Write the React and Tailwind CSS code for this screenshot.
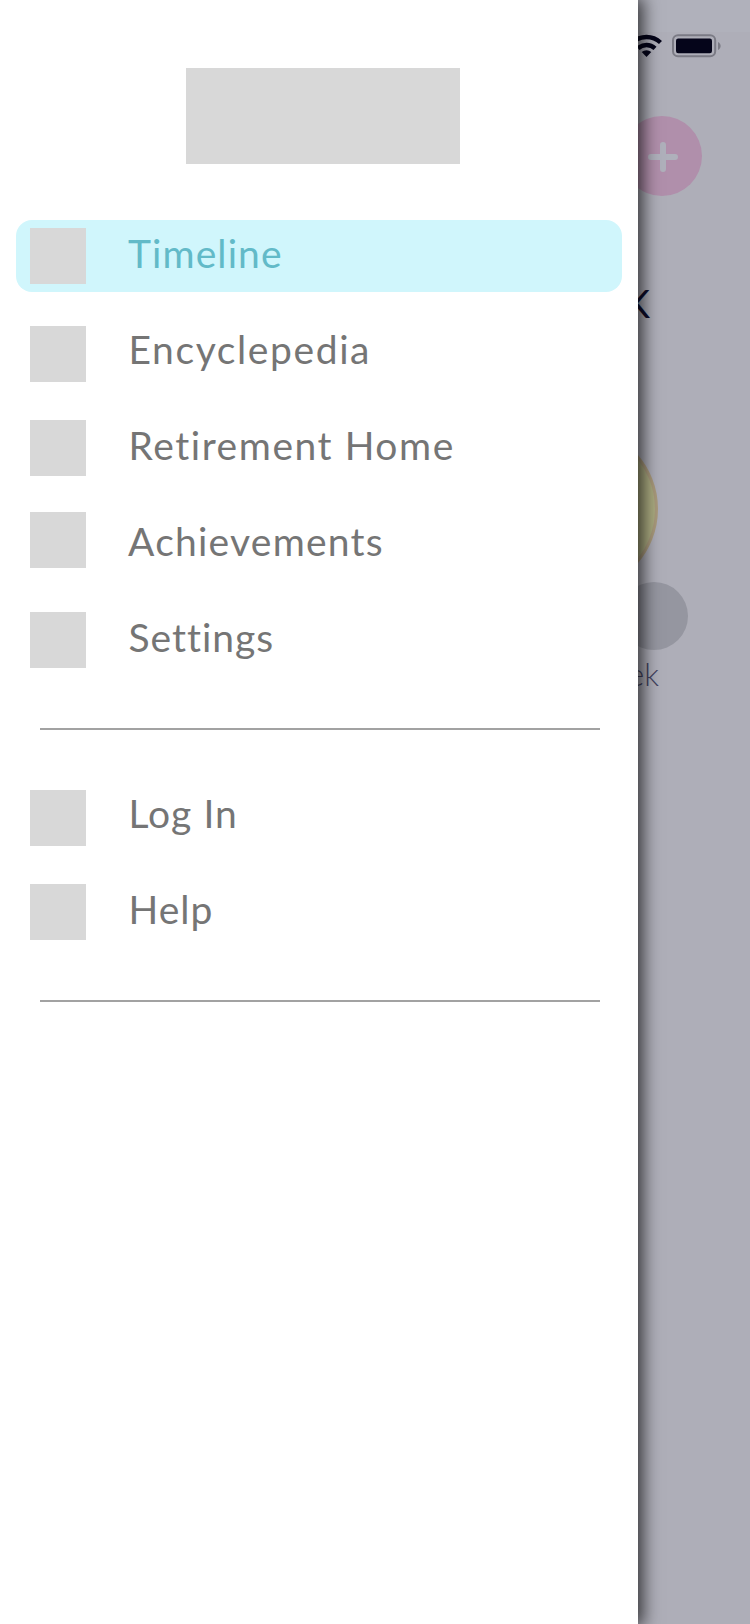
const primary = [
  { label: 'Timeline', active: true, icon: 'mt-2', text: 'ml-[42px] tracking-[1.1px]' },
  { label: 'Encyclepedia', icon: 'mt-2.5', text: 'ml-[42.5px] tracking-[1.6px]' },
  { label: 'Retirement Home', icon: 'mt-2', text: 'ml-[42.5px] tracking-[1.55px]' },
  { label: 'Achievements', icon: 'mt-1', text: 'ml-[42px] tracking-[1.25px]' },
  { label: 'Settings', icon: 'mt-2', text: 'ml-[42.5px] tracking-[1px]' },
];

const secondary = [
  { label: 'Log In', icon: 'mt-2.5', text: 'ml-[42.5px] tracking-[1px]' },
  { label: 'Help', icon: 'mt-2', text: 'ml-[42.5px] tracking-[1px]' },
];

function MenuItem({ label, active, icon, text }) {
  return (
    <a className={`flex h-[72px] items-start rounded-2xl pl-3.5 ${active ? 'bg-[#d0f6fc] text-[#62bac8]' : 'text-[#757575]'}`}>
      <span className={`size-14 shrink-0 bg-[#d8d8d8] ${icon}`} />
      <span className={`mt-[9px] whitespace-nowrap text-[39px] leading-[48px] ${text}`}>{label}</span>
    </a>
  );
}

function Divider() {
  return <hr className="ml-10 h-0.5 w-[560px] border-0 bg-[#a2a2a2]" />;
}

function Drawer() {
  return (
    <aside className="relative z-10 h-full w-[638px] shrink-0 bg-white shadow-[3px_0_16px_2px_rgba(0,0,0,0.7)]">
      <div className="ml-[186px] pt-[68px]">
        <div className="h-24 w-[274px] bg-[#d8d8d8]" />
      </div>
      <nav className="mx-4 mt-14 flex flex-col gap-6">
        {primary.map((item) => <MenuItem key={item.label} {...item} />)}
      </nav>
      <div className="h-[52px]" />
      <Divider />
      <nav className="mx-4 mt-[50px] flex flex-col gap-6">
        {secondary.map((item) => <MenuItem key={item.label} {...item} />)}
      </nav>
      <div className="h-[52px]" />
      <Divider />
    </aside>
  );
}

function Backdrop() {
  return (
    <svg className="h-full w-28 shrink-0" viewBox="638 0 112 1624" fill="none">
      <rect x="638" width="112" height="1624" fill="#aeaeb8" />
      <rect x="638" width="112" height="32" fill="#b0b1bb" />
      <g stroke="#05051a" strokeWidth="4.4">
        <path d="M632.5 42.5a20.5 20.5 0 0 1 28 0" />
        <path d="M638 48.3a12.5 12.5 0 0 1 17 0" />
      </g>
      <path d="M646.5 57l-4.800-4.900a7 7 0 0 1 9.600 0z" fill="#05051a" />
      <rect x="673" y="35.3" width="42.2" height="21" rx="5" stroke="#7b7b85" strokeWidth="2" />
      <rect x="676" y="38.5" width="36" height="14.7" rx="2.2" fill="#05051a" />
      <path d="M718 42c3.5 1.5 3.5 6.500 0 8z" fill="#7b7b85" />
      <circle cx="662" cy="156" r="40" fill="#b08fab" />
      <path d="M663 145v24M651 157h24" stroke="#afb0bb" strokeWidth="6" strokeLinecap="round" />
      <text x="650" y="318" textAnchor="end" fontSize="38" fill="#0d0c2b">K</text>
      <circle cx="575" cy="509" r="81.500" fill="#aaaa80" stroke="#a99a7c" strokeWidth="3" />
      <circle cx="654" cy="616" r="34" fill="#9596a0" />
      <text x="659" y="686" textAnchor="end" fontSize="31" fontWeight="300" fill="#42425f">ek</text>
    </svg>
  );
}

export default function App() {
  return (
    <main className="flex h-[1624px] w-[750px] overflow-hidden bg-white font-['Lato',sans-serif]">
      <Drawer />
      <Backdrop />
    </main>
  );
}
